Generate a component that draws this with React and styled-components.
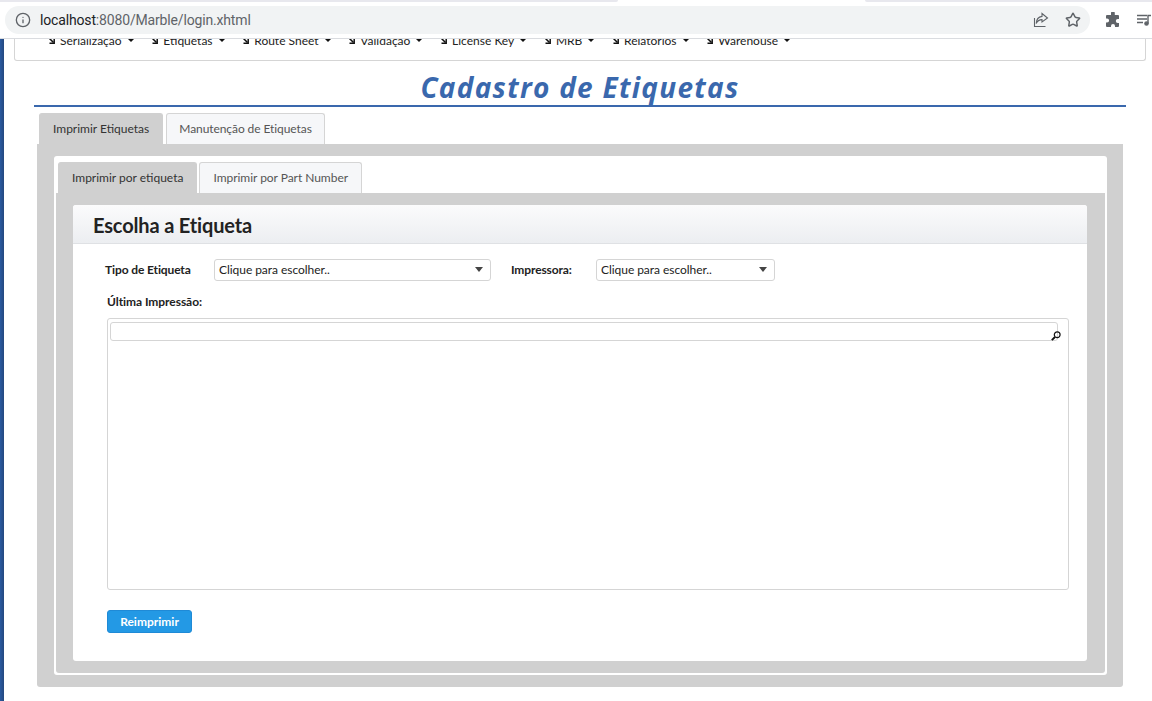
import styled, { createGlobalStyle } from "styled-components";
import { Info, Star } from "lucide-react";

const GlobalStyle = createGlobalStyle`
  html, body {
    margin: 0;
    padding: 0;
    background: #fff;
    font-family: "Lato", "Liberation Sans", sans-serif;
    font-size: 12px;
    color: #222;
    overflow: hidden;
  }
`;

const Window = styled.div`
  width: 1152px;
  height: 701px;
  display: flex;
  flex-direction: column;
  overflow: hidden;
`;

const TabStrip = styled.div`
  height: 6px;
  flex: none;
  display: flex;
  justify-content: space-between;
  background: #fff;
`;

const StripPiece = styled.div`
  width: ${(p) => p.$width}px;
  height: 2px;
  background: #e8e8ee;
  border-radius: ${(p) => (p.$left ? "0 0 4px 0" : "0 0 0 4px")};
`;

const Toolbar = styled.div`
  height: 32px;
  flex: none;
  display: flex;
  align-items: flex-start;
  background: #fff;
  border-bottom: 1px solid #dadce0;
`;

const Omnibox = styled.div`
  margin-left: 5px;
  width: 1085px;
  height: 28px;
  border-radius: 14px;
  background: #f1f3f4;
  display: flex;
  align-items: center;
  padding: 0 9px 0 10px;
  box-sizing: border-box;
  color: #5f6368;
`;

const Url = styled.div`
  margin-left: 9px;
  flex: 1;
  font-family: "Roboto", "Liberation Sans", sans-serif;
  font-size: 14px;
  letter-spacing: -0.16px;
  color: #5f6368;

  b {
    font-weight: 400;
    color: #202124;
  }
`;

const ChromeIcon = styled.svg`
  flex: none;
  display: block;
`;

const StarIcon = styled(Star)`
  flex: none;
  margin-left: 16px;
`;

const ExtensionSlot = styled.div`
  margin-left: 15px;
  height: 28px;
  display: flex;
  align-items: center;
`;

const Page = styled.div`
  flex: 1;
  display: flex;
  min-height: 0;
`;

const SideBar = styled.div`
  width: 4px;
  flex: none;
  background: linear-gradient(to right, #2a5aa0, #24487f);
`;

const Content = styled.div`
  flex: 1;
  min-width: 0;
  padding-left: 10px;
`;

const MenuBox = styled.div`
  width: 1132px;
  height: 22px;
  box-sizing: border-box;
  border: 1px solid #d5d5d5;
  border-top: 0;
  border-radius: 0 0 3px 3px;
  overflow: hidden;
`;

const MenuRow = styled.div`
  display: flex;
  margin-top: -6px;
  padding-left: 32px;
  gap: 15.7px;
  height: 14px;
  align-items: center;
`;

const MenuItem = styled.div`
  display: flex;
  align-items: center;
  white-space: nowrap;
  font-size: 12px;
  color: #222;
`;

const MenuArrow = styled.svg`
  width: 8px;
  height: 8px;
  margin-right: 5px;
`;

const Caret = styled.span`
  width: 0;
  height: 0;
  margin-left: 5px;
  border-left: 4px solid transparent;
  border-right: 4px solid transparent;
  border-top: 4px solid #111;
`;

const Title = styled.h1`
  margin: 7px 0 0 20px;
  width: 1092px;
  height: 37px;
  border-bottom: 2px solid #3a68ad;
  text-align: center;
  font-family: "Open Sans", "Liberation Sans", sans-serif;
  font-style: italic;
  font-weight: 700;
  font-size: 28px;
  line-height: 38px;
  letter-spacing: 1.28px;
  color: #3a68ad;
`;

const TabList = styled.div`
  display: flex;
  gap: ${(p) => p.$gap}px;
  height: ${(p) => p.$height}px;
  padding-left: ${(p) => p.$inset}px;
  align-items: flex-end;
`;

const Tab = styled.div`
  height: 100%;
  box-sizing: border-box;
  padding: 0 ${(p) => p.$pad || 13}px 2px;
  display: flex;
  align-items: center;
  border: 1px solid ${(p) => (p.$active ? "#d0d0d0" : "#d5d5d5")};
  border-bottom: 0;
  border-radius: 3px 3px 0 0;
  background: ${(p) => (p.$active ? "#d0d0d0" : "#f6f7f9")};
  color: ${(p) => (p.$active ? "#333" : "#555")};
  font-size: 12px;
  letter-spacing: ${(p) => p.$tracking || 0}px;
  white-space: nowrap;
`;

const OuterTabs = styled.div`
  margin: 6px 0 0 23px;
  width: 1086px;
`;

const OuterPanel = styled.div`
  height: 543px;
  box-sizing: border-box;
  padding: 12px 16px 12px 17px;
  background: #d0d0d0;
  border-radius: 0 0 3px 3px;
`;

const InnerFrame = styled.div`
  height: 100%;
  box-sizing: border-box;
  padding: 6px 2px 2px;
  background: #fff;
  border-radius: 3px;
`;

const InnerPanel = styled.div`
  height: 480px;
  box-sizing: border-box;
  padding: 12px 18px 12px 17px;
  background: #d0d0d0;
  border-radius: 0 0 3px 3px;
`;

const Card = styled.div`
  height: 100%;
  box-sizing: border-box;
  background: #fff;
  border-radius: 3px;
  display: flex;
  flex-direction: column;
`;

const CardHeader = styled.div`
  height: 39px;
  flex: none;
  box-sizing: border-box;
  padding: 2px 0 0 20px;
  display: flex;
  align-items: center;
  background: linear-gradient(to bottom, #fbfbfc, #eceef1);
  border-bottom: 1px solid #dfe1e4;
  border-radius: 3px 3px 0 0;
  font-size: 20px;
  font-weight: 700;
  letter-spacing: -0.15px;
  color: #222;
`;

const CardBody = styled.div`
  flex: 1;
  padding: 15px 18px 0 34px;
`;

const FormRow = styled.div`
  display: flex;
  align-items: center;
  height: 22px;
`;

const FieldLabel = styled.label`
  width: ${(p) => p.$width}px;
  margin-left: ${(p) => p.$inset || 0}px;
  padding-bottom: 1px;
  flex: none;
  font-size: 12px;
  font-weight: 700;
  letter-spacing: -0.12px;
  color: #222;
`;

const Select = styled.div`
  width: ${(p) => p.$width}px;
  height: 22px;
  flex: none;
  box-sizing: border-box;
  padding: 0 7px 2px 4px;
  display: flex;
  align-items: center;
  justify-content: space-between;
  border: 1px solid #d5d5d5;
  border-radius: 3px;
  font-size: 12px;
  letter-spacing: -0.05px;
  color: #222;
`;

const SelectCaret = styled(Caret)`
  margin: 0;
  border-top: 5px solid #444;
`;

const PrintLabel = styled.div`
  margin: 13px 0 0;
  font-size: 12px;
  line-height: 16px;
  font-weight: 700;
  letter-spacing: -0.06px;
  color: #222;
`;

const ListBox = styled.div`
  margin-top: 8px;
  height: 272px;
  box-sizing: border-box;
  padding: 3px 2px;
  border: 1px solid #d5d5d5;
  border-radius: 3px;
`;

const FilterWrap = styled.div`
  position: relative;
  width: 948px;
  height: 19px;
  box-sizing: border-box;
  border: 1px solid #d5d5d5;
  border-radius: 3px;
`;

const FilterIcon = styled.svg`
  position: absolute;
  right: -4px;
  top: 8px;
  width: 10px;
  height: 10px;
`;

const PrintButton = styled.button`
  display: block;
  margin-top: 20px;
  width: 85px;
  height: 23px;
  padding: 0;
  border: 1px solid #1f8ad6;
  border-radius: 3px;
  background: #2399e5;
  color: #fff;
  font-family: "Lato", "Liberation Sans", sans-serif;
  font-size: 12px;
  font-weight: 700;
`;

const menuItems = [
  "Serialização",
  "Etiquetas",
  "Route Sheet",
  "Validação",
  "License Key",
  "MRB",
  "Relatorios",
  "Warehouse",
];

export default function App() {
  return (
    <Window>
      <GlobalStyle />
      <TabStrip>
        <StripPiece $left $width={618} />
        <StripPiece $width={287} />
      </TabStrip>
      <Toolbar>
        <Omnibox>
          <Info size={16} strokeWidth={2} color="#5f6368" />
          <Url>
            <b>localhost</b>:8080/Marble/login.xhtml
          </Url>
          <ChromeIcon width="16" height="16" viewBox="0 0 16 16" fill="none" stroke="#5f6368" strokeWidth="1.1">
            <path d="M1.5 6v8.5h11" />
            <path d="M9 1.5 14.5 6 9 10V7.6C6.5 7.6 4.5 8.6 3.2 11.5 3.4 7.5 5.6 4.8 9 4.4Z" />
          </ChromeIcon>
          <StarIcon size={16} strokeWidth={2.2} color="#5f6368" />
        </Omnibox>
        <ExtensionSlot>
          <ChromeIcon width="16" height="16" viewBox="0 0 16 16" fill="#5f6368">
            <path d="M6 1.2a1.9 1.9 0 0 1 3.8 0V3h3.2a1 1 0 0 1 1 1v3h-1.2a2 2 0 0 0 0 4H14v3a1 1 0 0 1-1 1h-3v-1a2 2 0 0 0-4 0v1H2a1 1 0 0 1-1-1v-3.4h1a2.1 2.1 0 0 0 0-4.2H1V4a1 1 0 0 1 1-1h4Z" />
          </ChromeIcon>
        </ExtensionSlot>
        <ExtensionSlot>
          <ChromeIcon width="16" height="16" viewBox="0 0 16 16" fill="none" stroke="#5f6368" strokeWidth="1.4">
            <path d="M1 3.5h10M1 7h10M1 10.5h6" />
            <path d="M12 11.5V3.5h3" />
            <circle cx="10.5" cy="11.5" r="1.6" fill="#5f6368" />
          </ChromeIcon>
        </ExtensionSlot>
      </Toolbar>
      <Page>
        <SideBar />
        <Content>
          <MenuBox>
            <MenuRow>
              {menuItems.map((item) => (
                <MenuItem key={item}>
                  <MenuArrow viewBox="0 0 8 8" fill="none" stroke="#111" strokeWidth="1.5">
                    <path d="M0.5 0.5 6.5 6.5" />
                    <path d="M7.2 2.5V7.2H2.5" />
                  </MenuArrow>
                  {item}
                  <Caret />
                </MenuItem>
              ))}
            </MenuRow>
          </MenuBox>
          <Title>Cadastro de Etiquetas</Title>
          <OuterTabs>
            <TabList $gap={3} $height={31} $inset={2}>
              <Tab $active>Imprimir Etiquetas</Tab>
              <Tab $pad={12} $tracking={-0.08}>Manutenção de Etiquetas</Tab>
            </TabList>
            <OuterPanel>
              <InnerFrame>
                <TabList $gap={2} $height={31} $inset={2}>
                  <Tab $active>Imprimir por etiqueta</Tab>
                  <Tab $tracking={-0.04}>Imprimir por Part Number</Tab>
                </TabList>
                <InnerPanel>
                  <Card>
                    <CardHeader>Escolha a Etiqueta</CardHeader>
                    <CardBody>
                      <FormRow>
                        <FieldLabel $width={109} $inset={-2}>Tipo de Etiqueta</FieldLabel>
                        <Select $width={277}>
                          Clique para escolher..
                          <SelectCaret />
                        </Select>
                        <FieldLabel $width={85} $inset={20}>Impressora:</FieldLabel>
                        <Select $width={179}>
                          Clique para escolher..
                          <SelectCaret />
                        </Select>
                      </FormRow>
                      <PrintLabel>Última Impressão:</PrintLabel>
                      <ListBox>
                        <FilterWrap>
                          <FilterIcon viewBox="0 0 10 10" fill="none" stroke="#111">
                            <circle cx="6.2" cy="3.8" r="2.9" strokeWidth="1.2" />
                            <path d="M4 6 .8 9.2" strokeWidth="1.9" />
                          </FilterIcon>
                        </FilterWrap>
                      </ListBox>
                      <PrintButton>Reimprimir</PrintButton>
                    </CardBody>
                  </Card>
                </InnerPanel>
              </InnerFrame>
            </OuterPanel>
          </OuterTabs>
        </Content>
      </Page>
    </Window>
  );
}
